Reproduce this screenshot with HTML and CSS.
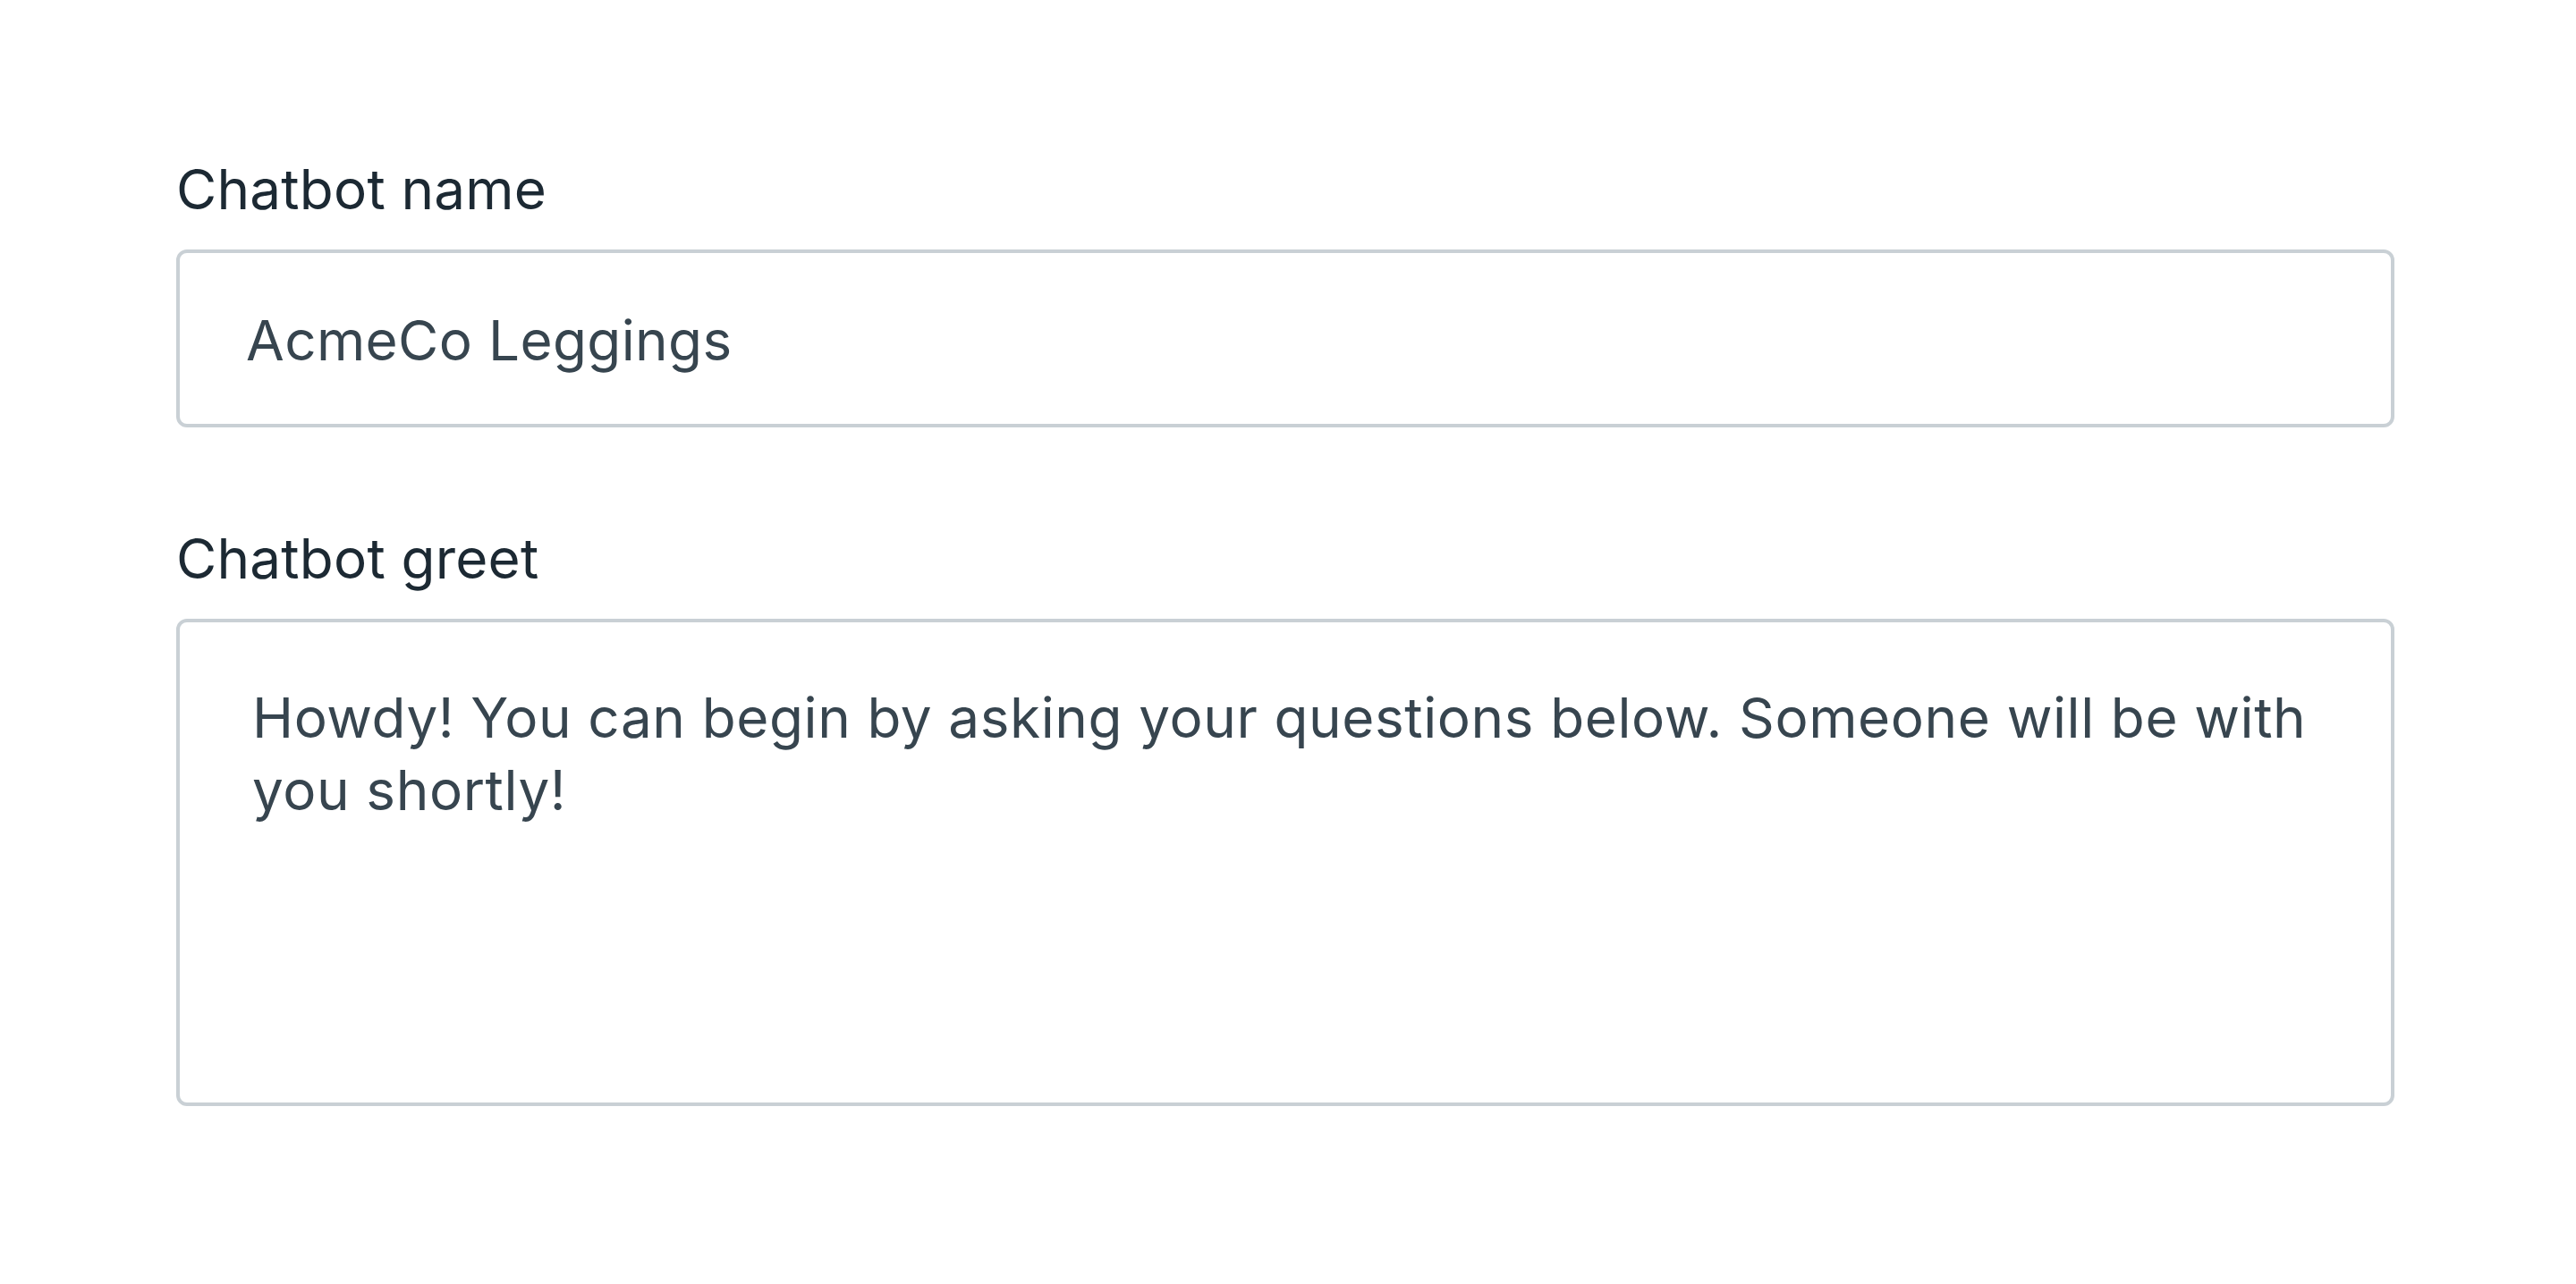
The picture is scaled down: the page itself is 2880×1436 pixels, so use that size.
FILE: index.html
```html
<!DOCTYPE html>
<html lang="en">
<head>
<meta charset="utf-8">
<title>Chatbot settings</title>
<link rel="stylesheet" href="styles.css">
</head>
<body>
<form class="form">
  <div class="field">
    <label class="label" for="name">Chatbot name</label>
    <input class="input" id="name" type="text" value="AcmeCo Leggings">
  </div>
  <div class="field">
    <label class="label" for="greet">Chatbot greet</label>
    <textarea class="textarea" id="greet">Howdy! You can begin by asking your questions below. Someone will be with you shortly!</textarea>
  </div>
</form>
</body>
</html>
```

FILE: styles.css
```css
html, body {
  margin: 0;
  padding: 0;
  background: #ffffff;
}

body {
  font-family: Inter, "Liberation Sans", sans-serif;
}

.form {
  display: flex;
  flex-direction: column;
  gap: 111px;
  padding: 176px 0 0 197px;
  width: 2480px;
}

.field {
  display: flex;
  flex-direction: column;
  gap: 31px;
}

.label {
  font-size: 62px;
  line-height: 72px;
  color: #1c2933;
  font-weight: 400;
  letter-spacing: 0.2px;
}

.input,
.textarea {
  box-sizing: border-box;
  width: 2480px;
  margin: 0;
  border: 4px solid #c9d0d5;
  border-radius: 12px;
  background: #ffffff;
  font-family: Inter, "Liberation Sans", sans-serif;
  font-size: 62px;
  color: #37454f;
  outline: none;
}

.input {
  height: 199px;
  padding: 3px 74px 0 74px;
  letter-spacing: 0.35px;
}

.textarea {
  display: block;
  height: 545px;
  padding: 66px 81px 0 81px;
  line-height: 81px;
  letter-spacing: 0.6px;
  resize: none;
  overflow: hidden;
}
```
